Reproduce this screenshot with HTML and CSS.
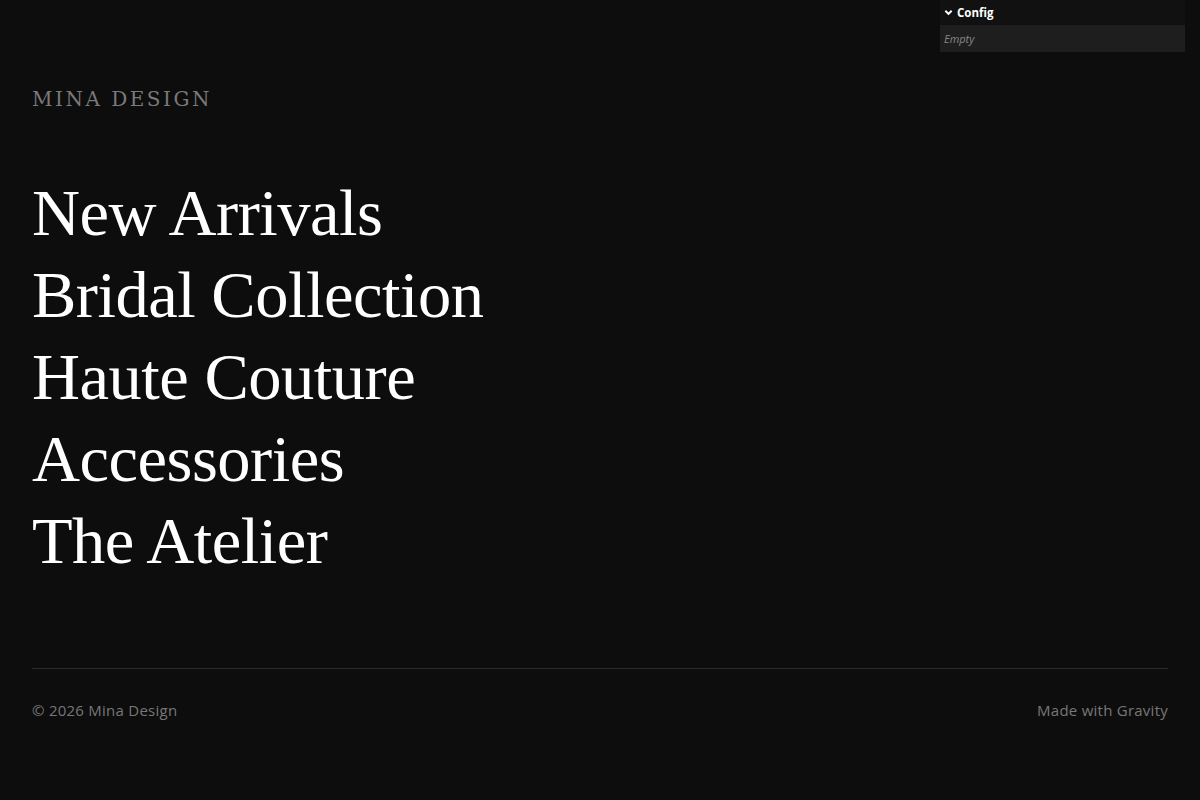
FILE: index.html
```html
<!DOCTYPE html>
<html lang="en">
<head>
<meta charset="utf-8">
<title>Mina Design</title>
<link rel="stylesheet" href="styles.css">
</head>
<body>
<div class="page">
  <header class="brand">MINA DESIGN</header>
  <nav class="menu">
    <a class="menu-item" href="#">New Arrivals</a>
    <a class="menu-item" href="#">Bridal Collection</a>
    <a class="menu-item" href="#">Haute Couture</a>
    <a class="menu-item" href="#">Accessories</a>
    <a class="menu-item" href="#">The Atelier</a>
  </nav>
  <footer class="footer">
    <span>© 2026 Mina Design</span>
    <span>Made with Gravity</span>
  </footer>
</div>
<aside class="config">
  <div class="config-head">
    <svg class="chev" viewBox="0 0 10 10" width="9" height="9"><path d="M1.5 3 L5 6.5 L8.5 3" fill="none" stroke="#fff" stroke-width="2.2"/></svg>
    <span>Config</span>
  </div>
  <div class="config-body">Empty</div>
</aside>
</body>
</html>
```
FILE: styles.css
```css
html, body {
  margin: 0;
  padding: 0;
  background: #0d0d0d;
  height: 100%;
}
body {
  width: 1200px;
  height: 800px;
  overflow: hidden;
  position: relative;
}
.page {
  padding: 84px 32px 0 32px;
  display: flex;
  flex-direction: column;
}
.brand {
  font-family: "DejaVu Serif", "Liberation Serif", serif;
  font-size: 20px;
  letter-spacing: 2.5px;
  color: #7a7a7a;
  line-height: 30px;
}
.menu {
  margin-top: 58px;
  display: flex;
  flex-direction: column;
}
.menu-item {
  font-family: "Liberation Serif", "DejaVu Serif", serif;
  font-size: 66.5px;
  line-height: 82px;
  color: #ffffff;
  text-decoration: none;
  letter-spacing: -0.5px;
}
.footer {
  margin-top: 86px;
  border-top: 1px solid #2a2a2a;
  padding-top: 31px;
  display: flex;
  justify-content: space-between;
  font-family: "Open Sans", "Noto Sans", sans-serif;
  font-size: 15px;
  letter-spacing: 0.25px;
  color: #777;
  line-height: 20px;
}
.config {
  position: absolute;
  top: 0;
  left: 940px;
  width: 245px;
  background: #111;
  font-family: "Open Sans", "Noto Sans", sans-serif;
}
.config-head {
  height: 25px;
  display: flex;
  align-items: center;
  gap: 4px;
  padding-left: 4px;
  color: #fff;
  font-size: 11.5px;
  font-weight: 700;
}
.config-body {
  height: 27px;
  background: #1e1e1e;
  color: #888;
  font-style: italic;
  font-size: 11px;
  display: flex;
  align-items: center;
  padding-left: 4px;
}
```
